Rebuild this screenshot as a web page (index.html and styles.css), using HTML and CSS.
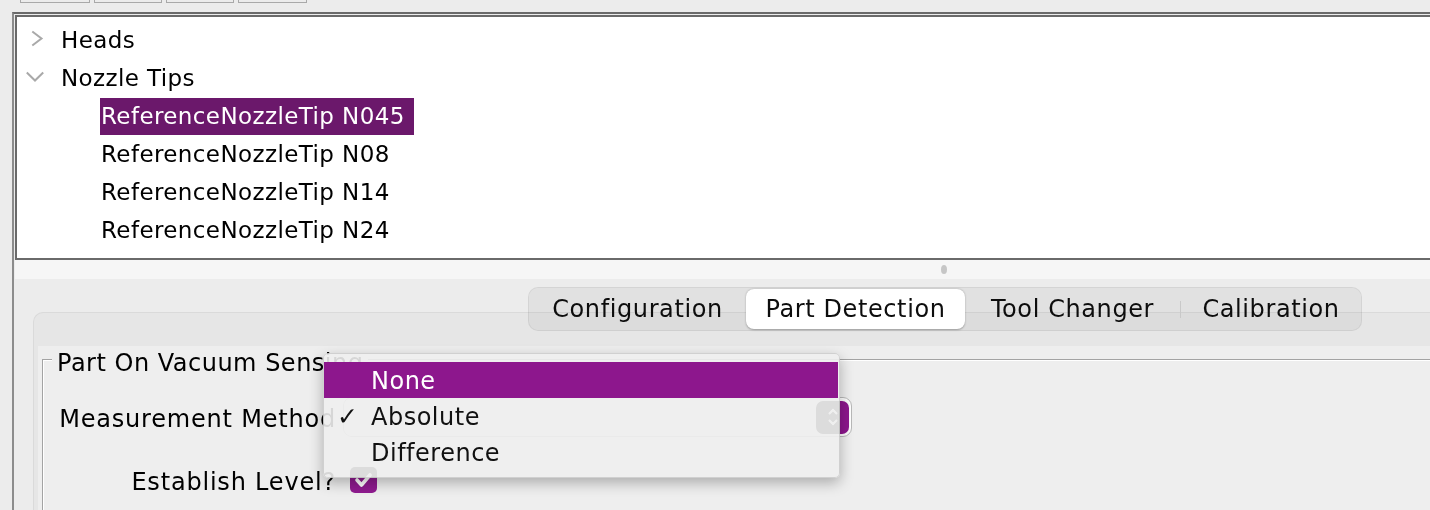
FILE: index.html
```html
<!DOCTYPE html>
<html>
<head>
<meta charset="utf-8">
<link rel="stylesheet" href="styles.css">
</head>
<body>
<div class="stubs"><span class="s1"></span><span class="s2"></span><span class="s3"></span><span class="s4"></span></div>
<div class="split">
  <div class="tree">
    <div class="row"><svg class="chev" viewBox="0 0 20 20"><polyline points="6.3,1.5 15.5,8.5 6.3,15.5"/></svg><span>Heads</span></div>
    <div class="row"><svg class="chev" viewBox="0 0 20 20"><polyline points="0.8,4.5 9,12.5 17.2,4.5"/></svg><span>Nozzle Tips</span></div>
    <div class="row child"><span class="sel">ReferenceNozzleTip N045</span></div>
    <div class="row child"><span>ReferenceNozzleTip N08</span></div>
    <div class="row child"><span>ReferenceNozzleTip N14</span></div>
    <div class="row child"><span>ReferenceNozzleTip N24</span></div>
    <div class="row child"><span>ReferenceNozzleTip N40</span></div>
  </div>
  <div class="band"><span class="dot"></span></div>
  <div class="lower">
    <div class="tabs">
      <div class="tab t1">Configuration</div>
      <div class="tab t2 active">Part Detection</div>
      <div class="tab t3">Tool Changer</div>
      <i class="sep"></i>
      <div class="tab t4">Calibration</div>
    </div>
    <div class="panel">
      <div class="inner">
        <div class="group">
          <div class="group-head"><span class="gl-left"></span><span class="group-title">Part On Vacuum Sensing</span><span class="gl-right"></span></div>
          <div class="group-body">
            <div class="label">Measurement Method</div>
            <div class="combo"><span class="combo-btn"><svg viewBox="0 0 16 24"><polyline points="4,9 8,5 12,9"/><polyline points="4,15 8,19 12,15"/></svg></span></div>
            <div class="label">Establish Level?</div>
            <div class="check"><svg viewBox="0 0 26 26"><polyline points="6.5,13 11,18 19.5,8"/></svg></div>
          </div>
        </div>
      </div>
    </div>
  </div>
</div>
<div class="popup">
  <div class="item hl"><span class="mark"></span><span>None</span></div>
  <div class="item"><span class="mark">✓</span><span>Absolute</span></div>
  <div class="item"><span class="mark"></span><span>Difference</span></div>
</div>
</body>
</html>
```
FILE: styles.css
```css
html, body {
  margin: 0;
  padding: 0;
}
body {
  background: #ececec;
  font-family: "DejaVu Sans", "Noto Sans", sans-serif;
  color: #000;
  width: 1430px;
  height: 510px;
  overflow: hidden;
  position: relative;
}

/* bottoms of the toolbar buttons above */
.stubs {
  display: flex;
  gap: 4px;
  padding-left: 20px;
  height: 3px;
}
.stubs span {
  box-sizing: border-box;
  height: 3px;
  border: 1px solid #a9a9a9;
  border-top: none;
}
.stubs .s1 { width: 70px; }
.stubs .s2 { width: 68px; }
.stubs .s3 { width: 68px; }
.stubs .s4 { width: 69px; }

/* split pane */
.split {
  margin: 9px 0 0 12px;
  width: 1500px;
  height: 600px;
  border-left: 2px solid #8c8c8c;
  border-top: 2px solid #6a6a6a;
  padding: 1px 0 0 1px;
}

.tree {
  box-sizing: border-box;
  height: 245px;
  border: 2px solid #6a6a6a;
  border-right: none;
  background: #fff;
  padding-top: 4px;
  overflow: hidden;
}
.row {
  height: 38px;
  display: flex;
  align-items: center;
  font-size: 23px;
  letter-spacing: 0.4px;
  white-space: nowrap;
}
.chev {
  width: 20px;
  height: 20px;
  margin-left: 9px;
  margin-right: 15px;
  flex: none;
}
.chev polyline {
  fill: none;
  stroke: #a9a9a9;
  stroke-width: 2;
}
.row.child {
  padding-left: 84px;
}
.sel {
  background: #6b186b;
  color: #fff;
  line-height: 37px;
  padding: 0 9px 0 1px;
  margin-left: -1px;
}

.band {
  height: 19px;
  background: #f6f6f6;
  display: flex;
  align-items: center;
}
.dot {
  width: 6px;
  height: 9px;
  border-radius: 50%;
  background: #c6c6c6;
  margin-left: 926px;
}

.lower {
  padding: 8px 0 0 18px;
}
.tabs {
  display: flex;
  box-sizing: border-box;
  margin-left: 495px;
  width: 834px;
  height: 44px;
  border-radius: 10px;
  background: rgba(0, 0, 0, 0.045);
  border: 1px solid rgba(0, 0, 0, 0.06);
  position: relative;
  z-index: 1;
  font-size: 24px;
  letter-spacing: 0.6px;
  color: #0d0d0d;
}
.tab {
  display: flex;
  align-items: center;
  justify-content: center;
  white-space: nowrap;
}
.t1 { width: 217px; }
.t2 { width: 219px; }
.t3 { width: 215px; }
.t4 { width: 180px; }
.tab.active {
  margin: 1px 0;
  background: #fff;
  border-radius: 8px;
  box-shadow: 0 0.5px 2px rgba(0, 0, 0, 0.3);
}
.sep {
  width: 1px;
  height: 17px;
  align-self: center;
  background: #c9c9c9;
}

.panel {
  margin-top: -19px;
  background: #e6e6e6;
  border-top: 1px solid #dadada;
  border-left: 1px solid #dadada;
  border-top-left-radius: 10px;
  padding: 33px 0 0 4px;
  height: 300px;
}
.inner {
  background: #eeeeee;
  height: 260px;
  padding: 3px 0 0 4px;
}

.group-head {
  display: flex;
  height: 26px;
}
.gl-left {
  width: 9px;
  margin-top: 10px;
  border-top: 1px solid #a3a3a3;
  border-left: 1px solid #a3a3a3;
  box-shadow: inset 1px 1px 0 #fff;
}
.group-title {
  padding: 0 5px;
  line-height: 28px;
  font-size: 24px;
  letter-spacing: 0.5px;
  white-space: nowrap;
}
.gl-right {
  flex: 1;
  margin-top: 10px;
  border-top: 1px solid #a3a3a3;
  box-shadow: inset 0 1px 0 #fff;
}
.group-body {
  border-left: 1px solid #a3a3a3;
  box-shadow: inset 1px 0 0 #fff;
  display: grid;
  grid-template-columns: 293px 509px;
  grid-auto-rows: 40px;
  column-gap: 7px;
  row-gap: 23px;
  padding-top: 22px;
  height: 200px;
  align-content: start;
  align-items: center;
  font-size: 24px;
  letter-spacing: 0.8px;
}
.label {
  text-align: right;
  white-space: nowrap;
  padding-top: 3px;
}
.combo {
  box-sizing: border-box;
  height: 40px;
  display: flex;
  justify-content: flex-end;
  align-items: center;
  border-radius: 9px;
  background: #fbfbfb;
  border: 1px solid #b9b9b9;
  box-shadow: inset 0 0 0 1px #fff;
  padding-right: 2px;
}
.combo-btn {
  width: 33px;
  height: 33px;
  border-radius: 7px;
  background: #8c168c;
  display: flex;
  align-items: center;
  justify-content: center;
}
.combo-btn svg {
  width: 16px;
  height: 24px;
}
.combo-btn polyline {
  fill: none;
  stroke: #fff;
  stroke-width: 2;
}
.check {
  width: 27px;
  height: 26px;
  margin-left: 7px;
  border-radius: 5px;
  background: #8f1b8f;
}
.check svg {
  display: block;
  width: 27px;
  height: 26px;
}
.check polyline {
  fill: none;
  stroke: #fff;
  stroke-width: 3.6;
  stroke-linecap: round;
  stroke-linejoin: round;
}

/* open combo popup (overlay) */
.popup {
  position: absolute;
  left: 323px;
  top: 353px;
  width: 517px;
  height: 125px;
  box-sizing: border-box;
  padding-top: 8px;
  background: rgba(237, 237, 237, 0.9);
  -webkit-backdrop-filter: grayscale(1) brightness(1.08);
  backdrop-filter: grayscale(1) brightness(1.08);
  border: 1px solid rgba(0, 0, 0, 0.13);
  border-radius: 5px;
  box-shadow: 0 5px 14px rgba(0, 0, 0, 0.28);
  font-size: 24px;
  letter-spacing: 0.5px;
  color: #111;
}
.item {
  height: 36px;
  display: flex;
  align-items: center;
  padding-left: 13px;
  padding-top: 1px;
  box-sizing: border-box;
}
.item.hl {
  background: #8d178d;
  color: #fff;
  margin-right: 1px;
}
.mark {
  width: 34px;
  font-size: 25px;
  font-weight: bold;
}
```
